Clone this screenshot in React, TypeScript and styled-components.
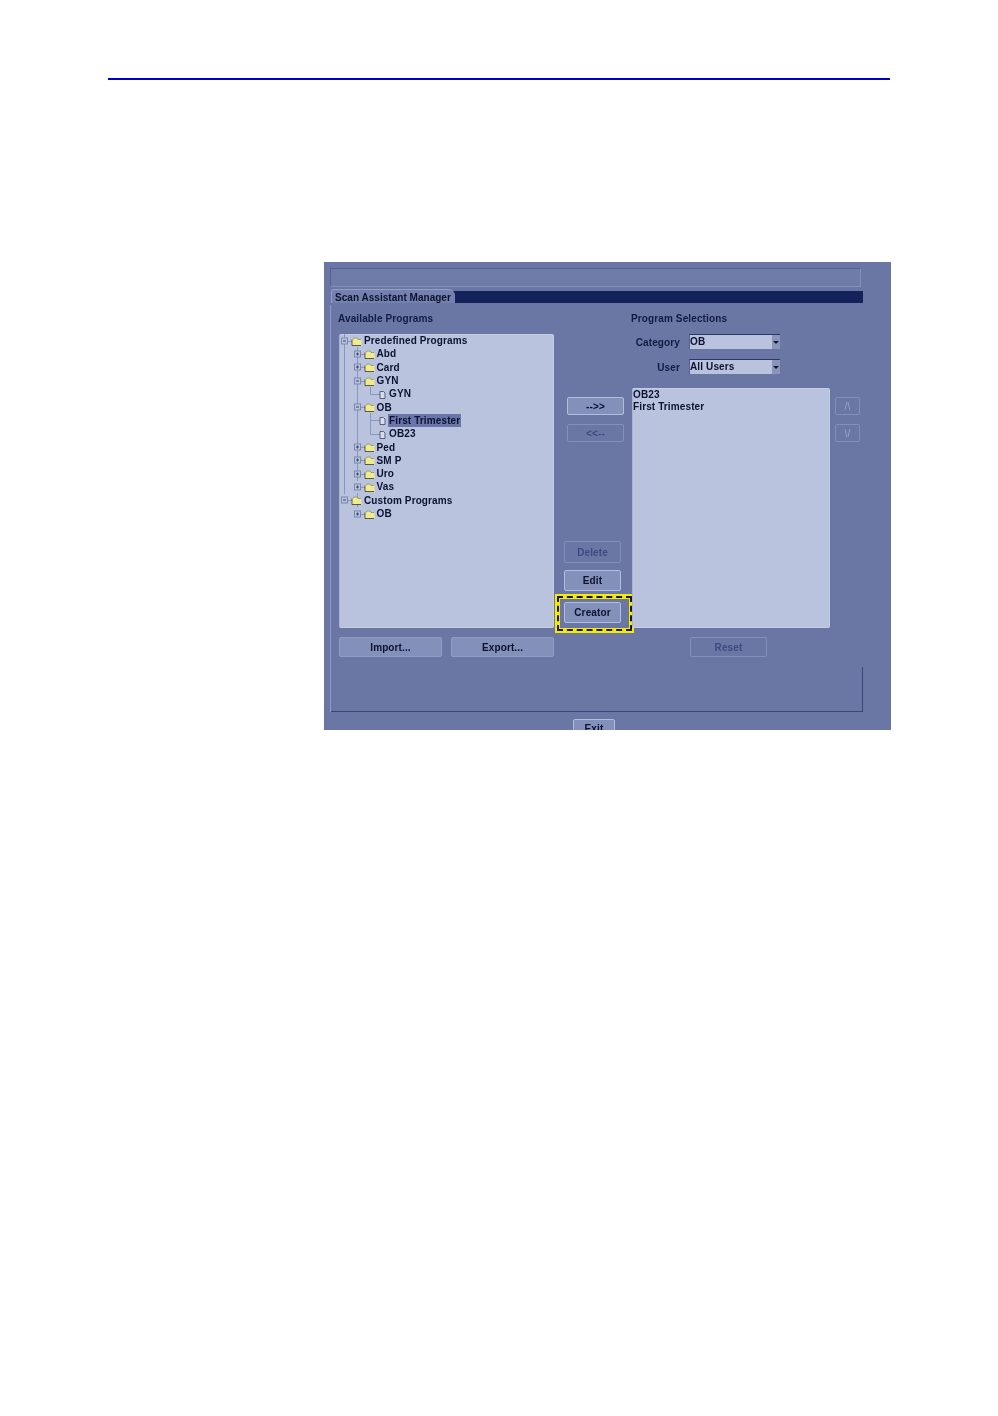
import React from "react";
import styled, { createGlobalStyle } from "styled-components";

const Global = createGlobalStyle`
  html, body { margin: 0; padding: 0; background: #fff; }
  * { box-sizing: border-box; }
`;

const Page = styled.div`
  width: 998px;
  height: 1416px;
  padding-top: 78px;
  background: #fff;
  font-family: "Liberation Sans", Arial, sans-serif;
  overflow: hidden;
`;

const Rule = styled.div`
  width: 782px;
  height: 2px;
  margin-left: 108px;
  background: #0000c4;
`;

const Panel = styled.section`
  width: 567px;
  height: 468px;
  margin: 182px 0 0 324px;
  padding: 6px 0 0 6px;
  background: #6a76a4;
  overflow: hidden;
  font-size: 10px;
  font-weight: 700;
  letter-spacing: 0.12px;
  color: #0c1230;
  filter: blur(0.3px);
`;

const TopBar = styled.div`
  width: 531px;
  height: 19px;
  margin-bottom: 4px;
  background: #707ca8;
  border: 1px solid #848fb8;
  border-top-color: #56628f;
  border-left-color: #56628f;
`;

const TabStrip = styled.div`
  width: 532px;
  height: 12px;
  margin-left: 1px;
  background: #14225c;
  display: flex;
`;

const Tab = styled.div`
  width: 124px;
  height: 14px;
  margin-top: -2px;
  padding-left: 3px;
  line-height: 15px;
  letter-spacing: 0.03px;
  white-space: nowrap;
  background: #7480ad;
  border-top: 1px solid #95a0c6;
  border-left: 1px solid #95a0c6;
  border-radius: 3px 7px 0 0;
`;

const Frame = styled.div`
  width: 533px;
  margin-top: 2px;
  border-left: 1px solid #8f9ac2;
`;

const Content = styled.div`
  display: flex;
  padding: 7px 0 0 8px;
`;

const Column = styled.div<{ $width: number; $top?: number }>`
  display: flex;
  flex-direction: column;
  align-items: flex-start;
  width: ${(p) => p.$width}px;
  padding-top: ${(p) => p.$top ?? 0}px;
`;

const SideColumn = styled(Column)`
  margin-left: 5px;
  gap: 9px;
`;

const Title = styled.div`
  height: 13px;
  line-height: 13px;
  margin: 0 0 9px -1px;
  color: #121c42;
`;

const Well = styled.div<{ $width: number; $height: number }>`
  width: ${(p) => p.$width}px;
  height: ${(p) => p.$height}px;
  background: #b9c3de;
  border: 1px solid #c6cee6;
  border-left-color: #aab4d2;
  border-radius: 2px;
`;

const TreeList = styled.div`
  margin-top: -1px;
`;

const TreeRow = styled.div`
  display: flex;
  align-items: center;
  height: 13.3px;
  line-height: 13px;
  white-space: nowrap;
`;

const Guides = styled.svg`
  flex: none;
  height: 14px;
  overflow: visible;
`;

const TreeLabel = styled.span<{ $selected?: boolean }>`
  padding: 0 1px;
  margin-left: -1px;
  background: ${(p) => (p.$selected ? "#6a76aa" : "transparent")};
`;

const ListItem = styled.div`
  height: 12px;
  line-height: 12px;
`;

type BtnProps = {
  $w: number;
  $h: number;
  $off?: boolean;
  $flat?: boolean;
  $ghost?: boolean;
  $ml?: number;
  $mt?: number;
};

const Btn = styled.button<BtnProps>`
  width: ${(p) => p.$w}px;
  height: ${(p) => p.$h}px;
  margin: ${(p) => p.$mt ?? 0}px 0 0 ${(p) => p.$ml ?? 0}px;
  padding: 0;
  font: inherit;
  letter-spacing: inherit;
  font-weight: ${(p) => (p.$ghost ? 400 : 700)};
  color: ${(p) => (p.$ghost ? "#9aa5ca" : p.$off ? "#3e4a80" : "#0c1230")};
  background: ${(p) => (p.$off ? "#6a76a4" : "#8390b9")};
  border: 1px solid ${(p) => (p.$off ? "#8590b8" : p.$flat ? "#929dc3" : "#b3bddb")};
  border-radius: 2px;
`;

const ButtonRow = styled.div`
  display: flex;
  gap: 9px;
  margin-top: 9px;
`;

const HighlightOuter = styled.div`
  width: 79px;
  height: 39px;
  margin-top: 3px;
  padding: 2px;
  background: #f6ea00;
`;

const HighlightDash = styled.div`
  height: 100%;
  background: #f6ea00;
  border: 2px dashed #1a1a10;
`;

const HighlightInner = styled.div`
  height: 100%;
  padding: 3px 0 0 4px;
  background: #6a76a4;
  border: 1px solid #f6ea00;
`;

const FieldRow = styled.div<{ $gap: number }>`
  display: flex;
  align-items: center;
  height: 15px;
  margin-bottom: ${(p) => p.$gap}px;
`;

const FieldLabel = styled.label`
  width: 48px;
  margin-right: 9px;
  padding-top: 1px;
  text-align: right;
  color: #121c42;
`;

const Select = styled.div`
  display: flex;
  width: 91px;
  height: 15px;
  line-height: 13px;
  background: #b9c3de;
  border-top: 1px solid #2c3868;
  border-left: 1px solid #56628f;
`;

const SelectValue = styled.span`
  flex: 1;
`;

const SelectArrow = styled.span`
  display: flex;
  align-items: center;
  justify-content: center;
  width: 8px;
  background: #8a95b8;
  &::after {
    content: "";
    border: 3px solid transparent;
    border-top: 3px solid #10183a;
    border-bottom: 0;
  }
`;

const FootNote = styled.div`
  height: 45px;
  margin-top: 10px;
  border-right: 1px solid #3a4675;
  border-bottom: 1px solid #3a4675;
`;

const ExitRow = styled.div`
  display: flex;
  margin: 7px 0 0 243px;
`;

const line = "#8a95bb";

const Expander = ({ cx, open }: { cx: number; open: boolean }) => (
  <g>
    <rect x={cx - 3} y={4} width={6} height={6} fill="#b9c3de" stroke="#7c87ad" />
    <line x1={cx - 1.5} x2={cx + 1.5} y1={7} y2={7} stroke="#39446f" />
    {!open && <line x1={cx} x2={cx} y1={5.5} y2={8.5} stroke="#39446f" />}
  </g>
);

const Folder = ({ cx }: { cx: number }) => (
  <g>
    <path d={`M${cx - 4.5} 11.5V5.5h1l1-1.5h3l1 1.5h3.5v6z`} fill="#efeb8e" />
    <path d={`M${cx - 4.5} 5.5V11.5h9`} fill="none" stroke="#3b3a22" strokeWidth={0.8} />
    <path d={`M${cx - 3.5} 5.5l1-1.5h3l1 1.5h3`} fill="none" stroke="#77764a" strokeWidth={0.6} />
  </g>
);

const FileIcon = ({ cx }: { cx: number }) => (
  <path
    d={`M${cx - 2.5} 4.5h3.5l1.5 1.5v5.5h-5z`}
    fill="#d8dde8"
    stroke="#3a4468"
    strokeWidth={0.8}
  />
);

type Node = {
  label: string;
  level: number;
  kind: "open" | "closed" | "file";
  guides: number[];
  selected?: boolean;
};

const nodes: Node[] = [
  { label: "Predefined Programs", level: 0, kind: "open", guides: [5] },
  { label: "Abd", level: 1, kind: "closed", guides: [5, 18] },
  { label: "Card", level: 1, kind: "closed", guides: [5, 18] },
  { label: "GYN", level: 1, kind: "open", guides: [5, 18] },
  { label: "GYN", level: 2, kind: "file", guides: [5, 18] },
  { label: "OB", level: 1, kind: "open", guides: [5, 18] },
  { label: "First Trimester", level: 2, kind: "file", guides: [5, 18, 31], selected: true },
  { label: "OB23", level: 2, kind: "file", guides: [5, 18] },
  { label: "Ped", level: 1, kind: "closed", guides: [5, 18] },
  { label: "SM P", level: 1, kind: "closed", guides: [5, 18] },
  { label: "Uro", level: 1, kind: "closed", guides: [5, 18] },
  { label: "Vas", level: 1, kind: "closed", guides: [5] },
  { label: "Custom Programs", level: 0, kind: "open", guides: [18] },
  { label: "OB", level: 1, kind: "closed", guides: [] },
];

const Row = ({ node }: { node: Node }) => {
  const { level, kind, guides, label, selected } = node;
  const width = 24 + 12.5 * level;
  const exp = 4.5 + 13 * level;
  return (
    <TreeRow>
      <Guides width={width} viewBox={`0 0 ${width} 14`}>
        {guides.map((g) => (
          <line key={g} x1={g - 0.5} x2={g - 0.5} y1={0} y2={14} stroke={line} />
        ))}
        {kind === "file" ? (
          <>
            <line x1={30.5} x2={30.5} y1={0} y2={7.5} stroke={line} />
            <line x1={30.5} x2={40} y1={7.5} y2={7.5} stroke={line} />
            <FileIcon cx={42.5} />
          </>
        ) : (
          <>
            <line x1={exp} x2={exp + 8} y1={7.5} y2={7.5} stroke={line} />
            <Expander cx={exp} open={kind === "open"} />
            <Folder cx={exp + 12} />
          </>
        )}
      </Guides>
      <TreeLabel $selected={selected}>{label}</TreeLabel>
    </TreeRow>
  );
};

export default function App() {
  return (
    <Page>
      <Global />
      <Rule />
      <Panel>
        <TopBar />
        <TabStrip>
          <Tab>Scan Assistant Manager</Tab>
        </TabStrip>
        <Frame>
          <Content>
            <Column $width={216}>
              <Title>Available Programs</Title>
              <Well $width={215} $height={294}>
                <TreeList>
                  {nodes.map((n, i) => (
                    <Row key={i} node={n} />
                  ))}
                </TreeList>
              </Well>
              <ButtonRow>
                <Btn $w={103} $h={20} $flat>Import...</Btn>
                <Btn $w={103} $h={20} $flat>Export...</Btn>
              </ButtonRow>
            </Column>
            <Column $width={77} $top={85}>
              <Btn $w={57} $h={18} $ml={12}>--&gt;&gt;</Btn>
              <Btn $w={57} $h={18} $ml={12} $mt={9} $off>&lt;&lt;--</Btn>
              <Btn $w={57} $h={22} $ml={9} $mt={99} $off>Delete</Btn>
              <Btn $w={57} $h={21} $ml={9} $mt={7}>Edit</Btn>
              <HighlightOuter>
                <HighlightDash>
                  <HighlightInner>
                    <Btn $w={57} $h={21}>Creator</Btn>
                  </HighlightInner>
                </HighlightDash>
              </HighlightOuter>
            </Column>
            <Column $width={198}>
              <Title>Program Selections</Title>
              <FieldRow $gap={10}>
                <FieldLabel>Category</FieldLabel>
                <Select>
                  <SelectValue>OB</SelectValue>
                  <SelectArrow />
                </Select>
              </FieldRow>
              <FieldRow $gap={14}>
                <FieldLabel>User</FieldLabel>
                <Select>
                  <SelectValue>All Users</SelectValue>
                  <SelectArrow />
                </Select>
              </FieldRow>
              <Well $width={198} $height={240}>
                <ListItem>OB23</ListItem>
                <ListItem>First Trimester</ListItem>
              </Well>
              <Btn $w={77} $h={20} $ml={58} $mt={9} $off>Reset</Btn>
            </Column>
            <SideColumn $width={25} $top={85}>
              <Btn $w={25} $h={18} $off $ghost>/\</Btn>
              <Btn $w={25} $h={18} $off $ghost>\/</Btn>
            </SideColumn>
          </Content>
          <FootNote />
        </Frame>
        <ExitRow>
          <Btn $w={42} $h={18}>Exit</Btn>
        </ExitRow>
      </Panel>
    </Page>
  );
}
